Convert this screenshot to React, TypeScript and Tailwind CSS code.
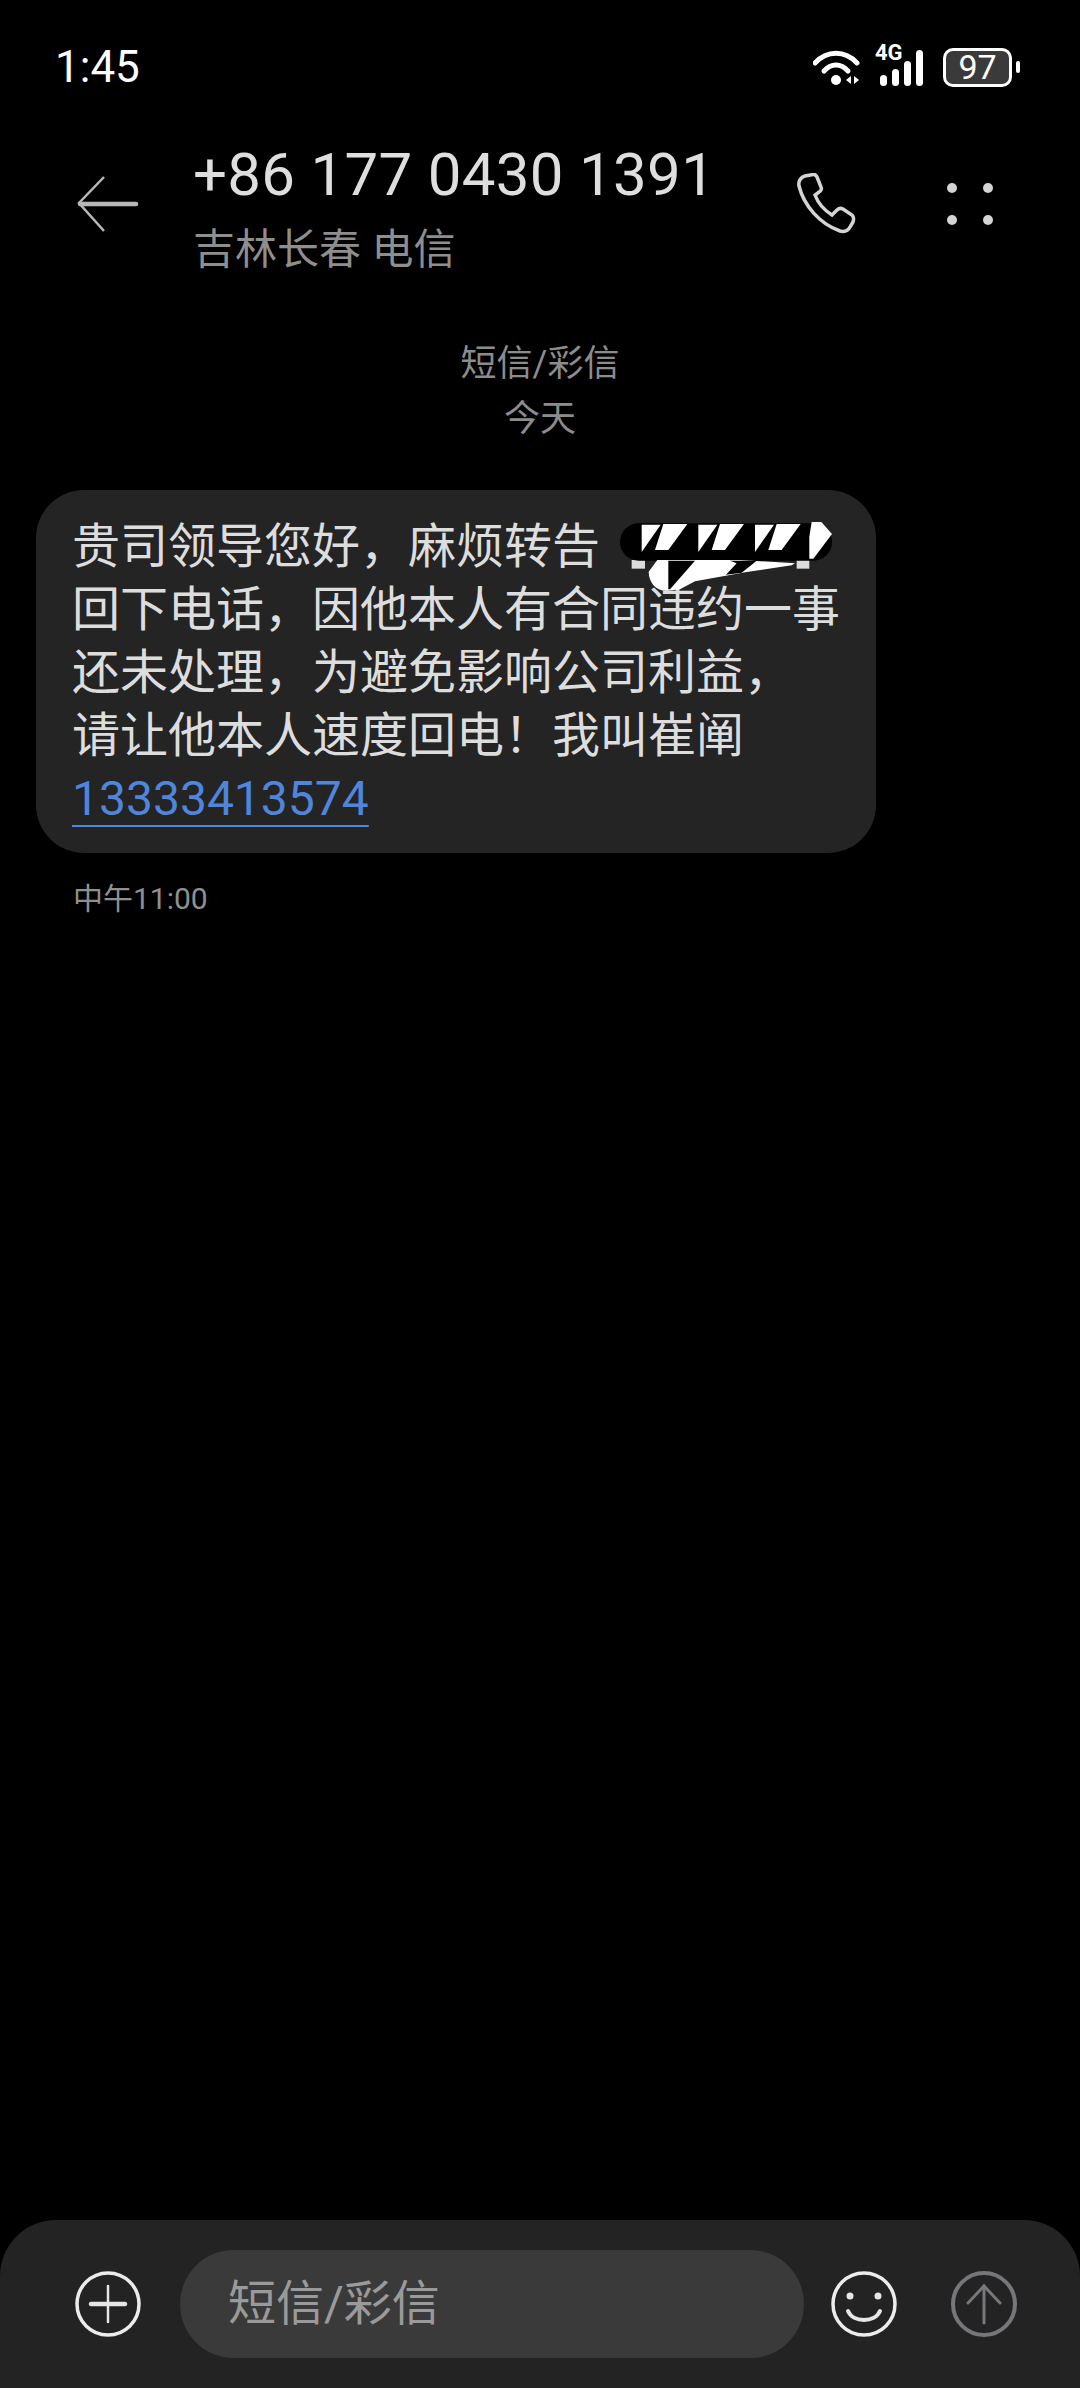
export default function App() {
  const stripes = [0, 170, 340];
  return (
    <div className="w-[1080px] h-[2388px] bg-black flex flex-col overflow-hidden font-['Roboto','Noto_Sans_CJK_SC',sans-serif]">
      {/* status bar */}
      <div className="h-[134px] pl-[55px] pr-[60px] flex items-center justify-between text-white">
        <span className="text-[44px] leading-[50px] font-normal">1:45</span>
        <div className="flex items-center">
          <svg width="50" height="38" viewBox="0 0 50 38" className="mr-[12px]">
            <path d="M2 15 C14 2 32 2 44 15" fill="none" stroke="#fff" strokeWidth="5" strokeLinecap="round" />
            <path d="M11 23 C18 15 28 15 35 23" fill="none" stroke="#fff" strokeWidth="5" strokeLinecap="round" />
            <circle cx="23" cy="32" r="5" fill="#fff" />
            <path d="M38 28 V36 L33 32 Z M41 28 V36 L46 32 Z" fill="#fff" />
          </svg>
          <div className="relative w-[54px] h-[38px] mr-[14px]">
            <span className="absolute left-0 top-[-7px] text-[22px] leading-[24px] font-bold">4G</span>
            <div className="absolute inset-0 flex items-end gap-[5px]">
              <div className="w-[7px] h-[11px] bg-white rounded-full ml-[5px]" />
              <div className="w-[7px] h-[17px] bg-white rounded-full" />
              <div className="w-[7px] h-[25px] bg-white rounded-full" />
              <div className="w-[7px] h-[36px] bg-white rounded-full" />
            </div>
          </div>
          <div className="w-[69px] h-[39px] border-[3px] border-white rounded-[10px] bg-[#3a3a3a] flex items-center justify-center text-[34px] leading-none">97</div>
          <div className="w-[4px] h-[12px] bg-white rounded-full ml-[4px]" />
        </div>
      </div>

      {/* header */}
      <div className="h-[140px] flex items-center">
        <svg width="64" height="60" viewBox="0 0 64 60" className="ml-[76px] mr-[53px]">
          <path d="M28 3 L3 29 L28 57" fill="none" stroke="#b8b8b8" strokeWidth="2.5" />
          <path d="M4 30 H60" fill="none" stroke="#b8b8b8" strokeWidth="4.5" strokeLinecap="round" />
        </svg>
        <div className="w-[603px] pt-[4px]">
          <div className="text-[60px] leading-[76px] tracking-[0.3px] text-[#dedede] font-normal">+86 177 0430 1391</div>
          <div className="mt-[12px] text-[42px] leading-[50px] text-[#8e8e8e] font-normal">吉林长春 电信</div>
        </div>
        <svg width="62" height="62" viewBox="0 0 62 62" className="mr-[92px]">
          <path d="M9 3 L17 1.5 C19 1 20 2 21 4 L25 14 C26 16 25 18 23 19 L19 22 C22 30 28 37 36 42 L41 37 C43 35 45 35 47 36 L56 42 C58 44 58 46 57 49 L54 54 C52 58 48 59 44 58 C24 51 8 33 3 13 C2 8 5 4 9 3 Z" fill="none" stroke="#d4d4d4" strokeWidth="3.5" />
        </svg>
        <div className="grid grid-cols-2 gap-x-[26px] gap-y-[22px] -ml-[3px]">
          <div className="w-[10px] h-[10px] rounded-full bg-[#d4d4d4]" />
          <div className="w-[10px] h-[10px] rounded-full bg-[#d4d4d4]" />
          <div className="w-[10px] h-[10px] rounded-full bg-[#d4d4d4]" />
          <div className="w-[10px] h-[10px] rounded-full bg-[#d4d4d4]" />
        </div>
      </div>

      {/* date */}
      <div className="mt-[63px] text-center text-[36px] leading-[55px] text-[#8c8c8c] font-normal">
        <div>短信/彩信</div>
        <div>今天</div>
      </div>

      {/* bubble */}
      <div className="relative mt-[43px] ml-[36px] w-[840px] h-[363px] rounded-[48px] bg-[#242425] pt-[25px] pl-[36px] text-[48px] leading-[63px] text-[#dddddd] font-normal whitespace-nowrap">
        贵司领导您好，麻烦转告
        <br />
        回下电话，因他本人有合同违约一事
        <br />
        还未处理，为避免影响公司利益，
        <br />
        请让他本人速度回电！我叫崔阐
        <br />
        <span className="text-[#4f86dc] underline decoration-2 underline-offset-[10px]">13333413574</span>
        <svg width="260" height="110" viewBox="0 0 780 330" className="absolute left-[564px] top-[10px]">
          <rect x="95" y="180" width="40" height="26" fill="#dcdcdc" />
          <rect x="590" y="180" width="38" height="26" fill="#dcdcdc" />
          <rect x="60" y="70" width="636" height="112" rx="56" fill="#000" />
          {stripes.map((d) => (
            <g key={d} fill="#fff" transform={`translate(${d} 0)`}>
              <path d="M125 74 H182 L125 156 Z" />
              <path d="M190 72 H262 L205 150 H165 Z" />
            </g>
          ))}
          <path d="M635 66 H664 L696 102 L640 176 H628 V110 Z" fill="#fff" />
          <path d="M146 215 L172 180 H420 L585 190 L575 196 L440 216 L285 244 L240 268 L205 272 C170 276 146 248 146 215 Z" fill="#fff" />
          <path d="M205 182 H285 L210 268 H205 Z" fill="#000" />
          <path d="M390 182 H470 L425 218 L378 224 L410 190 Z" fill="#000" />
        </svg>
      </div>

      <div className="mt-[30px] ml-[73px] text-[30px] leading-[32px] text-[#909090] font-normal">中午11:00</div>

      {/* composer */}
      <div className="mt-auto h-[168px] rounded-t-[56px] bg-[#232324] flex items-center pl-[75px]">
        <svg width="66" height="66" viewBox="0 0 66 66" className="mr-[39px]">
          <circle cx="33" cy="33" r="31" fill="none" stroke="#ececec" strokeWidth="3.5" />
          <path d="M33 15 V51" stroke="#e6e6e6" strokeWidth="2.5" strokeLinecap="round" />
          <path d="M16 33 H50" stroke="#e6e6e6" strokeWidth="4.5" strokeLinecap="round" />
        </svg>
        <div className="w-[624px] h-[108px] rounded-[54px] bg-[#3a3a3b] pl-[48px] flex items-center text-[48px] text-[#9a9a9a] font-normal">短信/彩信</div>
        <svg width="66" height="66" viewBox="0 0 66 66" className="ml-[27px]">
          <circle cx="33" cy="33" r="31" fill="none" stroke="#ececec" strokeWidth="3.5" />
          <circle cx="19" cy="25" r="3.5" fill="#e6e6e6" />
          <circle cx="47" cy="25" r="3.5" fill="#e6e6e6" />
          <path d="M17 40 C22 52 44 52 49 40" fill="none" stroke="#e6e6e6" strokeWidth="4" strokeLinecap="round" />
        </svg>
        <svg width="66" height="66" viewBox="0 0 66 66" className="ml-[54px]">
          <circle cx="33" cy="33" r="31" fill="none" stroke="#77777b" strokeWidth="4" />
          <path d="M33 52 V15" stroke="#77777b" strokeWidth="3" strokeLinecap="round" />
          <path d="M17 32 L33 15 L49 32" fill="none" stroke="#77777b" strokeWidth="3" strokeLinecap="round" />
        </svg>
      </div>
    </div>
  );
}
